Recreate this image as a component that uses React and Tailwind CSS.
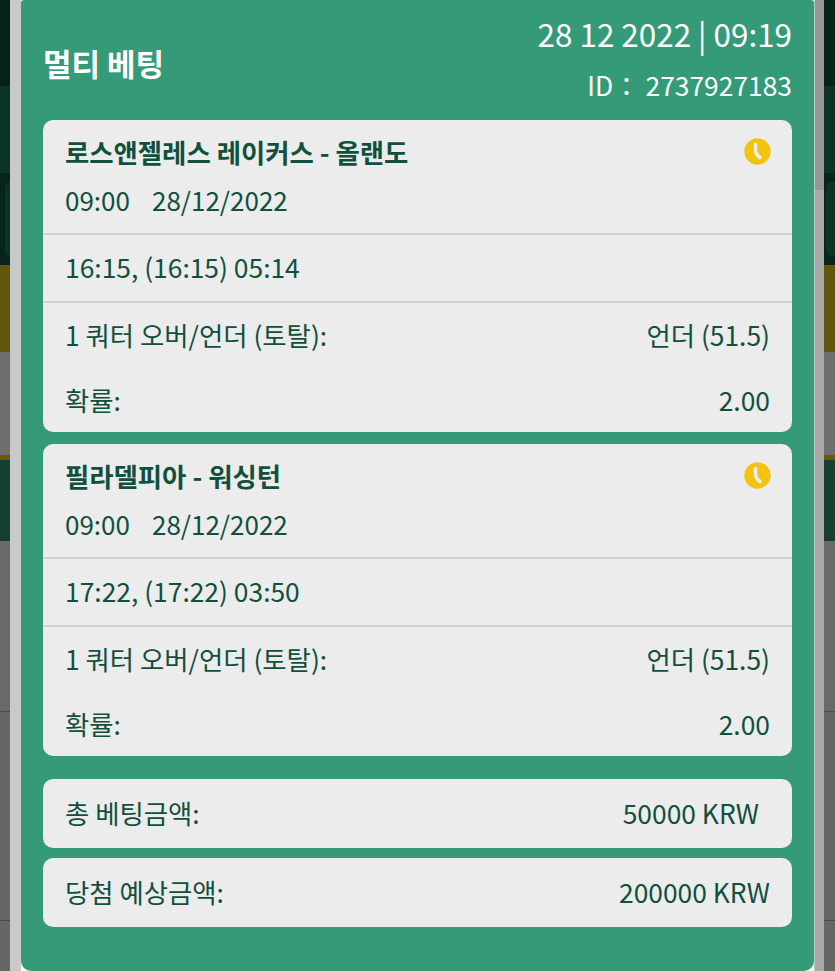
const bets = [
  {
    match: "로스앤젤레스 레이커스 - 올랜도",
    score: "16:15, (16:15) 05:14",
  },
  {
    match: "필라델피아 - 워싱턴",
    score: "17:22, (17:22) 03:50",
  },
];

// Dimmed page behind the modal, only its edges are visible
function BackdropStrip({ children }) {
  return (
    <div className="flex h-full flex-col">
      <div className="h-[86px] bg-[#06231a]" />
      <div className="h-[87px] bg-[#0b3426]" />
      <div className="flex h-[92px] bg-[#06241b] py-[9px]">{children}</div>
      <div className="h-[87px] bg-[#5f570e]" />
      <div className="h-[103px] bg-[#6e6e6e]" />
      <div className="h-[5px] bg-[#6b5a0a]" />
      <div className="h-[81px] bg-[#163f31]" />
      <div className="h-[171px] border-b border-[#3f4f49] bg-[#696969]" />
      <div className="h-[209px] border-b border-[#3f4f49] bg-[#666666]" />
      <div className="h-[50px] bg-[#666666]" />
    </div>
  );
}

function ClockIcon() {
  return (
    <svg width="27" height="27" viewBox="0 0 27 27" className="mt-[-1px] mr-[-1px]">
      <circle cx="13.5" cy="13.5" r="13.2" fill="#f2c40f" />
      <path
        d="M11.5 6.5 V12.5 Q11.5 16 16 19.5"
        fill="none"
        stroke="#ececec"
        strokeWidth="3.6"
        strokeLinecap="round"
      />
    </svg>
  );
}

function BetCard({ bet }) {
  return (
    <div className="h-[312px] rounded-[10px] bg-[#ececec]">
      <div className="h-[115px] border-b-2 border-[#d3d3d3] px-[22px] pt-[15px]">
        <div className="flex h-[33px] items-center justify-between">
          <span className="font-bold">{bet.match}</span>
          <ClockIcon />
        </div>
        <div className="mt-[15px] flex h-[33px] items-center gap-[22px] text-[26px]">
          <span>09:00</span>
          <span>28/12/2022</span>
        </div>
      </div>
      <div className="flex h-[68px] items-center border-b-2 border-[#d3d3d3] px-[22px] pb-[2px]">
        {bet.score}
      </div>
      <div className="flex h-[65px] items-center justify-between px-[22px] pb-[2px]">
        <span>1 쿼터 오버/언더 (토탈):</span>
        <span>언더 (51.5)</span>
      </div>
      <div className="flex h-[64px] items-center justify-between px-[22px]">
        <span>확률:</span>
        <span>2.00</span>
      </div>
    </div>
  );
}

function SummaryRow({ label, value, valueClass }) {
  return (
    <div className="flex h-[69px] items-center justify-between rounded-[10px] bg-[#ececec] px-[22px] pb-[2px]">
      <span>{label}</span>
      <span className={valueClass}>{value}</span>
    </div>
  );
}

export default function App() {
  return (
    <div className="flex h-[971px] w-[835px] overflow-hidden font-['Noto_Sans_CJK_KR','Noto_Sans',sans-serif] text-[26.4px] text-[#11503c]">
      <div className="w-[10px]">
        <BackdropStrip>
          <div className="ml-[5px] flex-1 rounded-l-[6px] bg-[#0b3426]" />
        </BackdropStrip>
      </div>
      <div className="w-[11px] bg-[#c9c9c9]" />

      <div className="h-full w-[793px] rounded-t-[3px] rounded-b-[10px] bg-[#359a78] px-[22px]">
        <div className="flex h-[120px] justify-between text-white">
          <h1 className="mt-[41px] text-[31px] leading-[44px] font-bold">멀티 베팅</h1>
          <div className="flex flex-col items-end">
            <div className="mt-[11px] text-[31.4px] leading-[46px]">28 12 2022 | 09:19</div>
            <div className="mt-[9px] leading-[38px]">ID： 2737927183</div>
          </div>
        </div>

        <div className="flex flex-col gap-[12px]">
          {bets.map((bet) => (
            <BetCard key={bet.match} bet={bet} />
          ))}
        </div>

        <div className="mt-[23px] flex flex-col gap-[10px]">
          <SummaryRow label="총 베팅금액:" value="50000 KRW" valueClass="mr-[11px]" />
          <SummaryRow label="당첨 예상금액:" value="200000 KRW" />
        </div>
      </div>

      <div className="flex w-[10px] flex-col border-l border-[#bcc9c4]">
        <div className="h-[190px] bg-[#979797]" />
        <div className="flex-1 bg-[#a9a9a9]" />
      </div>
      <div className="w-[11px]">
        <BackdropStrip>
          <div className="ml-[2px] flex-1 rounded-l-[6px] bg-[#0b3426]" />
        </BackdropStrip>
      </div>
    </div>
  );
}
